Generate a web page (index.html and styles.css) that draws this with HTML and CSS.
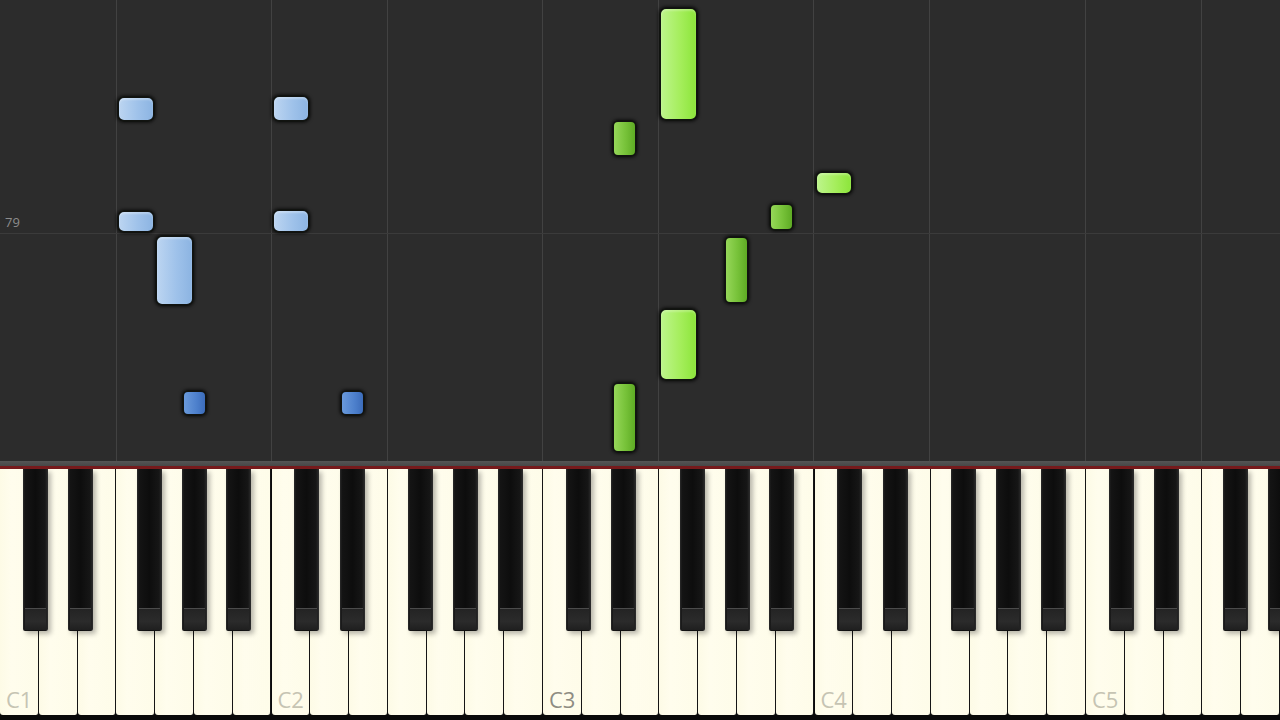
FILE: index.html
```html
<!DOCTYPE html>
<html lang="en">
<head>
    <meta charset="UTF-8">
    <meta name="viewport" content="width=device-width, initial-scale=1.0">
    <title>Piano roll</title>
    <link rel="stylesheet" href="styles.css">
</head>
<body>
    <div class="roll">
        <!-- grid: C and F lines -->
        <div class="vline" style="left: 116px"></div>
        <div class="vline" style="left: 271px"></div>
        <div class="vline" style="left: 387px"></div>
        <div class="vline" style="left: 542px"></div>
        <div class="vline" style="left: 658px"></div>
        <div class="vline" style="left: 813px"></div>
        <div class="vline" style="left: 929px"></div>
        <div class="vline" style="left: 1085px"></div>
        <div class="vline" style="left: 1201px"></div>
        <div class="hline" style="top: 233px"></div>
        <div class="measure">79</div>

        <!-- left hand -->
        <div class="note blue" style="left: 117px; top: 96px; width: 38px; height: 26px"></div>
        <div class="note blue" style="left: 117px; top: 210px; width: 38px; height: 23px"></div>
        <div class="note blue" style="left: 155px; top: 235px; width: 39px; height: 71px"></div>
        <div class="note blue" style="left: 272px; top: 95px; width: 38px; height: 27px"></div>
        <div class="note blue" style="left: 272px; top: 209px; width: 38px; height: 24px"></div>
        <div class="note blue-dark" style="left: 182px; top: 390px; width: 25px; height: 26px"></div>
        <div class="note blue-dark" style="left: 340px; top: 390px; width: 25px; height: 26px"></div>

        <!-- right hand -->
        <div class="note green" style="left: 659px; top: 7px; width: 39px; height: 114px"></div>
        <div class="note green" style="left: 815px; top: 171px; width: 38px; height: 24px"></div>
        <div class="note green" style="left: 659px; top: 308px; width: 39px; height: 73px"></div>
        <div class="note green-dark" style="left: 612px; top: 120px; width: 25px; height: 37px"></div>
        <div class="note green-dark" style="left: 769px; top: 203px; width: 25px; height: 28px"></div>
        <div class="note green-dark" style="left: 724px; top: 236px; width: 25px; height: 68px"></div>
        <div class="note green-dark" style="left: 612px; top: 382px; width: 25px; height: 71px"></div>
    </div>

    <div class="keyboard">
        <div class="keyboard-rail"></div>
        <div class="keyboard-felt"></div>
        <div class="keys">
            <div class="octave">
                <div class="white"><span class="label">C1</span></div>
                <div class="white"></div>
                <div class="white"></div>
                <div class="white"></div>
                <div class="white"></div>
                <div class="white"></div>
                <div class="white"></div>
                <div class="black cs"></div>
                <div class="black ds"></div>
                <div class="black fs"></div>
                <div class="black gs"></div>
                <div class="black as"></div>
            </div>
            <div class="octave">
                <div class="white"><span class="label">C2</span></div>
                <div class="white"></div>
                <div class="white"></div>
                <div class="white"></div>
                <div class="white"></div>
                <div class="white"></div>
                <div class="white"></div>
                <div class="black cs"></div>
                <div class="black ds"></div>
                <div class="black fs"></div>
                <div class="black gs"></div>
                <div class="black as"></div>
            </div>
            <div class="octave">
                <div class="white"><span class="label dark">C3</span></div>
                <div class="white"></div>
                <div class="white"></div>
                <div class="white"></div>
                <div class="white"></div>
                <div class="white"></div>
                <div class="white"></div>
                <div class="black cs"></div>
                <div class="black ds"></div>
                <div class="black fs"></div>
                <div class="black gs"></div>
                <div class="black as"></div>
            </div>
            <div class="octave">
                <div class="white"><span class="label">C4</span></div>
                <div class="white"></div>
                <div class="white"></div>
                <div class="white"></div>
                <div class="white"></div>
                <div class="white"></div>
                <div class="white"></div>
                <div class="black cs"></div>
                <div class="black ds"></div>
                <div class="black fs"></div>
                <div class="black gs"></div>
                <div class="black as"></div>
            </div>
            <div class="octave">
                <div class="white"><span class="label">C5</span></div>
                <div class="white"></div>
                <div class="white"></div>
                <div class="white"></div>
                <div class="white"></div>
                <div class="white"></div>
                <div class="white"></div>
                <div class="black cs"></div>
                <div class="black ds"></div>
                <div class="black fs"></div>
                <div class="black gs"></div>
                <div class="black as"></div>
            </div>
        </div>
    </div>
</body>
</html>
```

FILE: styles.css
```css
body {
    margin: 0;
    background-color: #000;
    font-family: 'Open Sans', 'DejaVu Sans', sans-serif;
    overflow: hidden;
}

.roll {
    position: relative;
    height: 461px;
    background-color: #2c2c2c;
    overflow: hidden;
}

.vline {
    position: absolute;
    top: 0;
    bottom: 0;
    width: 1px;
    background-color: #424242;
}

.hline {
    position: absolute;
    left: 0;
    right: 0;
    height: 1px;
    background-color: #3b3b3b;
}

.measure {
    position: absolute;
    left: 5px;
    top: 213px;
    font-size: 13px;
    color: #8c8c8c;
}

.note {
    position: absolute;
    box-sizing: border-box;
    border: 2px solid #111310;
    border-radius: 7px;
    box-shadow: 0 0 3px 1px rgba(0, 0, 0, 0.55);
}

.blue {
    background: linear-gradient(to right, #bcd5f1, #9fc2ea 55%, #8cb4e2);
    box-shadow: 0 0 3px 1px rgba(0, 0, 0, 0.55), inset 0 2px 2px rgba(255, 255, 255, 0.3);
}

.blue-dark {
    background: linear-gradient(to right, #6a9adb, #4d80cc 60%, #3c6cba);
    border-radius: 6px;
}

.green {
    background: linear-gradient(to right, #bdf58c, #a5ee5c 55%, #8ce53a);
    box-shadow: 0 0 3px 1px rgba(0, 0, 0, 0.55), inset 0 2px 2px rgba(255, 255, 255, 0.25);
}

.green-dark {
    background: linear-gradient(to right, #96d759, #77c239 55%, #5eab24);
    border-radius: 6px;
}

.keyboard {
    height: 259px;
    background-color: #000;
}

.keyboard-rail {
    height: 5px;
    background: linear-gradient(#555, #474747);
}

.keyboard-felt {
    height: 3px;
    background-color: #761a1c;
}

.keys {
    display: flex;
    height: 251px;
    width: 1280px;
    overflow: hidden;
    background-color: #0a0a0a;
}

.octave {
    position: relative;
    display: flex;
    flex: 0 0 271.515px;
    height: 246px;
}

.white {
    flex: 1;
    display: flex;
    align-items: flex-end;
    box-sizing: border-box;
    border-right: 1px solid #151515;
    border-radius: 0 0 3px 3px;
    background: linear-gradient(to right, #fdfbe6, #fffded 30%, #fefce9);
    padding: 0 0 5px 6px;
}

.label {
    font-size: 22px;
    line-height: 22px;
    color: #c6c4b3;
}

.label.dark {
    color: #8e8c82;
}

.black {
    position: absolute;
    top: 0;
    width: 25px;
    height: 162px;
    box-sizing: border-box;
    border-radius: 0 0 2px 2px;
    background: linear-gradient(to right, #2b2b2b, #141414 2px, #0d0d0d 50%, #161616 calc(100% - 3px), #2e2e2e);
    box-shadow: 3px 3px 5px rgba(0, 0, 0, 0.28);
}

.black::after {
    content: "";
    position: absolute;
    left: 2px;
    right: 2px;
    bottom: 1px;
    height: 21px;
    border-top: 1px solid #4b4b4b;
    background: linear-gradient(#242424, #2b2b2b 60%, #1f1f1f);
}

.cs { left: 22.5px; }
.ds { left: 68px; }
.fs { left: 136.5px; }
.gs { left: 181.5px; }
.as { left: 226px; }
```
